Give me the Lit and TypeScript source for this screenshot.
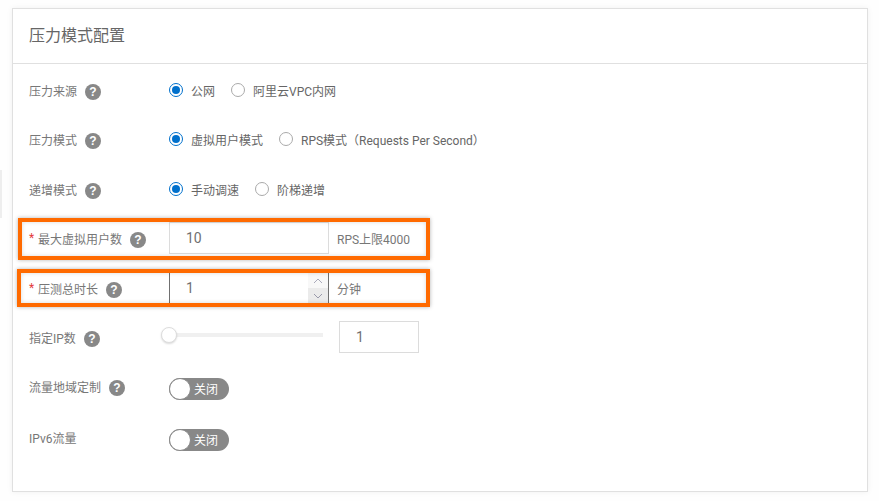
import { LitElement, html, css, svg } from "lit";
import { customElement } from "lit/decorators.js";

const help = html`<span class="help">?</span>`;
const up = svg`<svg class="chev" width="10" height="6" viewBox="0 0 10 6"><path d="M1 5l4-4 4 4" fill="none" stroke="#aab" stroke-width="1"/></svg>`;
const down = svg`<svg class="chev" width="10" height="6" viewBox="0 0 10 6"><path d="M1 1l4 4 4-4" fill="none" stroke="#99a" stroke-width="1"/></svg>`;

@customElement("app-root")
export class AppRoot extends LitElement {
  static styles = css`
    :host {
      display: block;
      position: relative;
      width: 879px;
      height: 501px;
      overflow: hidden;
      background: #fefefe;
      font-family: Roboto, "Noto Sans CJK SC", sans-serif;
      font-size: 12px;
      color: #666;
    }
    .page { padding: 8px 11px 9px 12px; height: 100%; box-sizing: border-box; }
    .card {
      height: 484px;
      box-sizing: border-box;
      border: 1px solid #e0e0e0;
      background: #fff;
      box-shadow: 0 0 6px rgba(0,0,0,.06);
    }
    .head {
      height: 55px;
      box-sizing: border-box;
      border-bottom: 1px solid #e0e0e0;
      padding: 0 0 1px 16px;
      display: flex;
      align-items: center;
      font-size: 16px;
      color: #666;
      line-height: 24px;
    }
    .form {
      padding: 10px 0 0 16px;
      display: grid;
      grid-template-rows: 49px 50px 49px 50px 49px 52px 51px 32px;
    }
    .row { display: flex; align-items: flex-start; height: 32px; }
    .label {
      width: 140px;
      height: 32px;
      flex: none;
      display: flex;
      align-items: center;
      box-sizing: border-box;
      color: #777;
    }
    .label.high { padding-bottom: 6px; }
    .star { color: #e4393c; width: 9px; flex: none; }
    .help {
      width: 16px;
      height: 16px;
      margin-left: 8px;
      margin-top: 3px;
      flex: none;
      border-radius: 50%;
      background: #888;
      color: #fff;
      font: bold 12px/16px "Liberation Sans", sans-serif;
      text-align: center;
    }
    .ctl { height: 32px; display: flex; align-items: center; }
    .radio { display: flex; align-items: center; margin-right: 16px; color: #666; }
    .radio i {
      width: 14px;
      height: 14px;
      box-sizing: border-box;
      border-radius: 50%;
      border: 1px solid #aaa;
      background: #fff;
      margin-right: 8px;
      flex: none;
      position: relative;
    }
    .radio i.on { border-color: #0070cc; }
    .radio i.on::after {
      content: "";
      position: absolute;
      inset: 2px;
      border-radius: 50%;
      background: #0070cc;
    }
    .input {
      width: 160px;
      height: 32px;
      box-sizing: border-box;
      border: 1px solid #dcdcdc;
      padding-left: 16px;
      display: flex;
      align-items: center;
      font-size: 14px;
      color: #707070;
      background: #fff;
      position: relative;
    }
    .input.focus { border-color: #707070; }
    .spin {
      position: absolute;
      right: 0;
      top: 0;
      bottom: 0;
      width: 20px;
      display: grid;
      grid-template-rows: 1fr 1fr;
    }
    .spin span { display: flex; align-items: center; justify-content: center; background: #f8f8f8; }
    .spin span + span { background: #ebebeb; }
    .suffix { margin-left: 8px; color: #777; }
    .slider { width: 154px; height: 4px; background: #f0f0f0; position: relative; margin: 0 16px 4px 0; }
    .knob {
      position: absolute;
      left: -8px;
      top: -6px;
      width: 16px;
      height: 16px;
      box-sizing: border-box;
      border-radius: 50%;
      background: #fff;
      border: 1px solid #ddd;
      box-shadow: 0 1px 2px rgba(0,0,0,.15);
    }
    .ip { width: 80px; }
    .switch {
      width: 60px;
      height: 22px;
      border-radius: 11px;
      background: #888;
      color: #fff;
      position: relative;
      box-sizing: border-box;
      padding: 1px 0 0 25px;
      line-height: 22px;
      font-size: 12px;
      margin-top: 5px;
    }
    .switch::before {
      content: "";
      position: absolute;
      left: 0;
      top: 0;
      width: 22px;
      height: 22px;
      box-sizing: border-box;
      border-radius: 50%;
      background: #fff;
      border: 1px solid #888;
    }
    .mark {
      position: absolute;
      box-sizing: border-box;
      border: 4px solid #ff6a00;
      box-shadow: 0 0 4px rgba(0,0,0,.3), inset 0 0 4px rgba(0,0,0,.15);
      pointer-events: none;
    }
    .m1 { left: 18px; top: 218px; width: 412px; height: 42px; }
    .m2 { left: 17px; top: 269px; width: 413px; height: 38px; }
    .edge { position: absolute; left: 0; top: 170px; width: 2px; height: 48px; background: #eee; }
  `;

  private radio(text: string, on = false) {
    return html`<label class="radio"><i class=${on ? "on" : ""}></i>${text}</label>`;
  }

  render() {
    return html`
      <div class="page">
        <section class="card">
          <header class="head">压力模式配置</header>
          <div class="form">
            <div class="row">
              <div class="label">压力来源${help}</div>
              <div class="ctl">${this.radio("公网", true)}${this.radio("阿里云VPC内网")}</div>
            </div>
            <div class="row">
              <div class="label">压力模式${help}</div>
              <div class="ctl">${this.radio("虚拟用户模式", true)}${this.radio("RPS模式（Requests Per Second）")}</div>
            </div>
            <div class="row">
              <div class="label">递增模式${help}</div>
              <div class="ctl">${this.radio("手动调速", true)}${this.radio("阶梯递增")}</div>
            </div>
            <div class="row">
              <div class="label"><span class="star">*</span>最大虚拟用户数${help}</div>
              <div class="ctl"><div class="input">10</div><span class="suffix">RPS上限4000</span></div>
            </div>
            <div class="row">
              <div class="label"><span class="star">*</span>压测总时长${help}</div>
              <div class="ctl">
                <div class="input focus">1<div class="spin"><span>${up}</span><span>${down}</span></div></div>
                <span class="suffix">分钟</span>
              </div>
            </div>
            <div class="row">
              <div class="label">指定IP数${help}</div>
              <div class="ctl"><div class="slider"><div class="knob"></div></div><div class="input ip">1</div></div>
            </div>
            <div class="row">
              <div class="label high">流量地域定制${help}</div>
              <div class="switch">关闭</div>
            </div>
            <div class="row">
              <div class="label high">IPv6流量</div>
              <div class="switch">关闭</div>
            </div>
          </div>
        </section>
      </div>
      <div class="edge"></div>
      <div class="mark m1"></div>
      <div class="mark m2"></div>
    `;
  }
}
